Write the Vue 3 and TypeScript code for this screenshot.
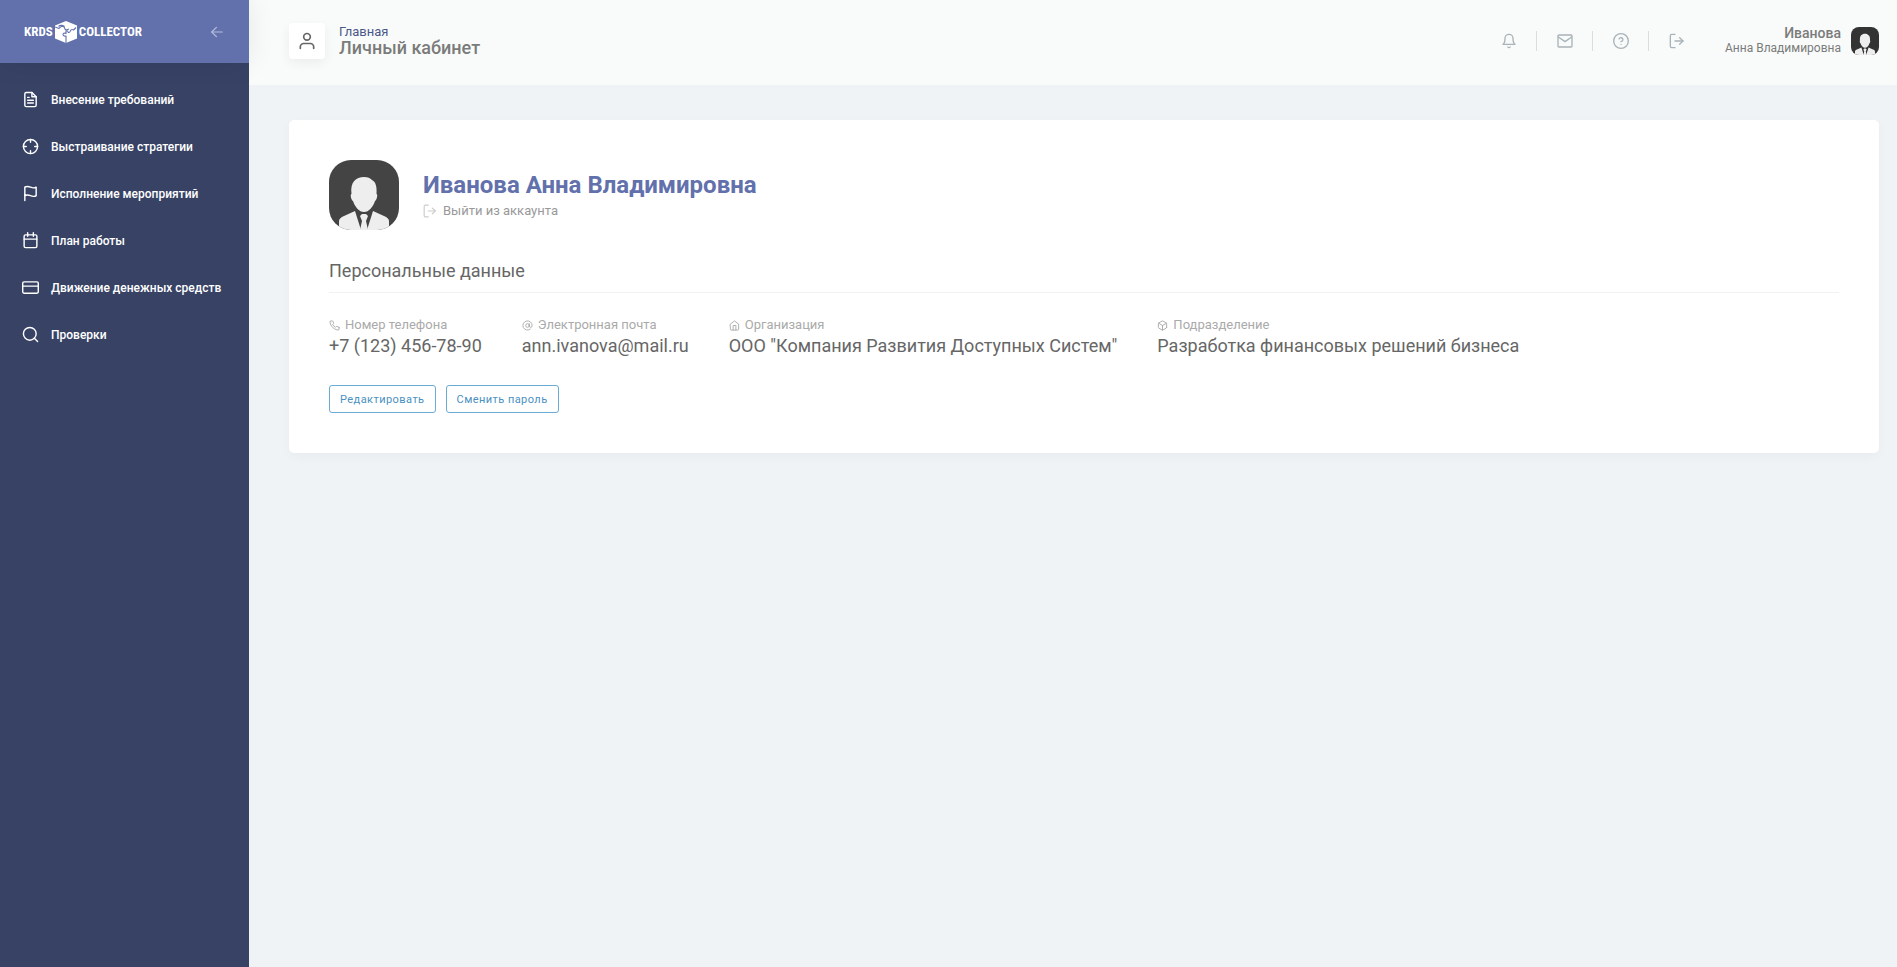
<script setup lang="ts">
import { defineComponent, h } from 'vue'

const icons: Record<string, string[]> = {
  file: ['M14 2H6a2 2 0 0 0-2 2v16a2 2 0 0 0 2 2h12a2 2 0 0 0 2-2V8z', 'M14 2v6h6', 'M16 13H8', 'M16 17H8', 'M10 9H8'],
  target: ['M22 12a10 10 0 1 1-20 0 10 10 0 0 1 20 0z', 'M22 12h-4', 'M6 12H2', 'M12 6V2', 'M12 22v-4'],
  flag: ['M4 15s1-1 4-1 5 2 8 2 4-1 4-1V3s-1 1-4 1-5-2-8-2-4 1-4 1z', 'M4 22v-7'],
  calendar: ['M5 4h14a2 2 0 0 1 2 2v14a2 2 0 0 1-2 2H5a2 2 0 0 1-2-2V6a2 2 0 0 1 2-2z', 'M16 1v5', 'M8 1v5', 'M3 10h18'],
  card: ['M3 4h18a2 2 0 0 1 2 2v12a2 2 0 0 1-2 2H3a2 2 0 0 1-2-2V6a2 2 0 0 1 2-2z', 'M1 10h22'],
  search: ['M20 11a9 9 0 1 1-18 0 9 9 0 0 1 18 0z', 'M22 22l-4.6-4.6'],
  arrow: ['M21 12H3', 'M11 4l-8 8 8 8'],
  user: ['M20 21v-2a4 4 0 0 0-4-4H8a4 4 0 0 0-4 4v2', 'M16 7a4 4 0 1 1-8 0 4 4 0 0 1 8 0z'],
  bell: ['M18 8A6 6 0 0 0 6 8c0 7-3 9-3 9h18s-3-2-3-9', 'M13.7 21a2 2 0 0 1-3.4 0'],
  mail: ['M3 3h18a1.500 1.500 0 0 1 1.500 1.500v15A1.500 1.500 0 0 1 21 21H3a1.500 1.500 0 0 1-1.500-1.500v-15A1.500 1.500 0 0 1 3 3z', 'M2 6l10 7 10-7'],
  help: ['M23 12a11 11 0 1 1-22 0 11 11 0 0 1 22 0z', 'M9.100 9a3 3 0 0 1 5.800 1c0 2-3 3-3 3', 'M12 17h.01'],
  exit: ['M9 22H4a2 2 0 0 1-2-2V4a2 2 0 0 1 2-2h5', 'M16 17l5-5-5-5', 'M21 12H9'],
  phone: ['M22 16.9v3a2 2 0 0 1-2.200 2 19.800 19.800 0 0 1-8.600-3.100 19.500 19.500 0 0 1-6-6A19.800 19.800 0 0 1 2.100 4.200 2 2 0 0 1 4.100 2h3a2 2 0 0 1 2 1.700c.1 1 .4 1.900.7 2.800a2 2 0 0 1-.5 2.100L8.100 9.900a16 16 0 0 0 6 6l1.300-1.300a2 2 0 0 1 2.100-.4c.9.3 1.800.6 2.800.7a2 2 0 0 1 1.700 2z'],
  at: ['M16 12a4 4 0 1 1-8 0 4 4 0 0 1 8 0z', 'M16 8v5a3 3 0 0 0 6 0v-1a10 10 0 1 0-4 8'],
  home: ['M3 9l9-7 9 7v11a2 2 0 0 1-2 2H5a2 2 0 0 1-2-2z', 'M9 22V12h6v10'],
  box: ['M21 16V8a2 2 0 0 0-1-1.700l-7-4a2 2 0 0 0-2 0l-7 4A2 2 0 0 0 3 8v8a2 2 0 0 0 1 1.700l7 4a2 2 0 0 0 2 0l7-4A2 2 0 0 0 21 16z', 'M3.300 7L12 12l8.700-5', 'M12 22V12'],
}

const Icon = defineComponent({
  props: { name: { type: String, required: true } },
  setup: (props) => () =>
    h(
      'svg',
      {
        viewBox: '0 0 24 24',
        fill: 'none',
        stroke: 'currentColor',
        'stroke-width': 2,
        'stroke-linecap': 'round',
        'stroke-linejoin': 'round',
        'aria-hidden': 'true',
      },
      icons[props.name].map((d) => h('path', { d })),
    ),
})

const Avatar = defineComponent({
  setup: () => () =>
    h('svg', { viewBox: '0 0 70 70', role: 'img', 'aria-label': 'Фото профиля' }, [
      h('rect', { width: 70, height: 70, fill: 'currentColor' }),
      h('path', {
        fill: '#eee',
        d: 'M22.500 34C21 22 27 17 35 17c4 0 6 1 8 3 4 2 5 7 4.500 14 1.500 0 .5 6-1.500 7-2 6-6 11-11 11s-9-5-11-11c-2-1-3-7-1.500-7z',
      }),
      h('path', { fill: '#eee', d: 'M10 70V61c0-2 2-4 5-5l11-5 6 19zM60 70V61c0-2-2-4-5-5l-11-5-6 19z' }),
      h('path', { fill: '#eee', d: 'M31 56l2-2h4l2 2-2 5 2 9h-8l2-9z' }),
    ]),
})

const nav = [
  { icon: 'file', text: 'Внесение требований' },
  { icon: 'target', text: 'Выстраивание стратегии' },
  { icon: 'flag', text: 'Исполнение мероприятий' },
  { icon: 'calendar', text: 'План работы' },
  { icon: 'card', text: 'Движение денежных средств' },
  { icon: 'search', text: 'Проверки' },
]

const actions = [
  { icon: 'bell', text: 'Уведомления' },
  { icon: 'mail', text: 'Сообщения' },
  { icon: 'help', text: 'Помощь' },
  { icon: 'exit', text: 'Выход' },
]

const fields = [
  { icon: 'phone', label: 'Номер телефона', value: '+7 (123) 456-78-90' },
  { icon: 'at', label: 'Электронная почта', value: 'ann.ivanova@mail.ru' },
  { icon: 'home', label: 'Организация', value: 'ООО "Компания Развития Доступных Систем"' },
  { icon: 'box', label: 'Подразделение', value: 'Разработка финансовых решений бизнеса' },
]
</script>

<template>
  <div class="layout">
    <aside class="sidebar">
      <div class="brand">
        <a class="logo" href="#">
          <span>KRDS</span>
          <svg class="cube" viewBox="0 0 22 22" aria-hidden="true">
            <path fill="#fff" d="M11 0L22 4.500V17.500L11 22L0 17.500V4.500z" />
            <g fill="none" stroke="#6271ac" stroke-width="1.100" stroke-linejoin="round">
              <path d="M0 6l4 1.500c1-2 4-3 5-1.500 1 1 0 2 2 3l3-1" />
              <path d="M3.500 5.500c2-2 5-1 6 0" />
              <path d="M11 9.500v3c-2-1-3 0-3 1s1 2 3 1.500V22" />
              <path d="M11 10c3-1 1 2 3 1.500s1-3 3-3 1 1 2 0l2-2" />
            </g>
          </svg>
          <span>COLLECTOR</span>
        </a>
        <button class="collapse" type="button" aria-label="Свернуть меню"><Icon name="arrow" /></button>
      </div>
      <nav class="menu">
        <a v-for="item in nav" :key="item.text" href="#"><Icon :name="item.icon" />{{ item.text }}</a>
      </nav>
    </aside>

    <div class="page">
      <header class="topbar">
        <div class="badge"><Icon name="user" /></div>
        <div class="heading">
          <a href="#">Главная</a>
          <h1>Личный кабинет</h1>
        </div>
        <div class="actions">
          <button v-for="item in actions" :key="item.icon" type="button" :aria-label="item.text">
            <Icon :name="item.icon" />
          </button>
        </div>
        <div class="account">
          <div class="account-name">
            <strong>Иванова</strong>
            <span>Анна Владимировна</span>
          </div>
          <Avatar class="avatar-small" />
        </div>
      </header>

      <main class="content">
        <section class="card">
          <div class="profile">
            <Avatar class="avatar" />
            <div>
              <h2>Иванова Анна Владимировна</h2>
              <a class="logout" href="#"><Icon name="exit" />Выйти из аккаунта</a>
            </div>
          </div>
          <h3>Персональные данные</h3>
          <dl class="fields">
            <div v-for="field in fields" :key="field.label">
              <dt><Icon :name="field.icon" />{{ field.label }}</dt>
              <dd>{{ field.value }}</dd>
            </div>
          </dl>
          <div class="buttons">
            <button type="button">Редактировать</button>
            <button type="button">Сменить пароль</button>
          </div>
        </section>
      </main>
    </div>
  </div>
</template>

<style>
body {
  margin: 0;
  background: #eff3f6;
}
</style>

<style scoped>
.layout {
  display: flex;
  min-height: 100vh;
  font-family: Roboto, "Liberation Sans", sans-serif;
  color: #666;
}
a {
  color: inherit;
  text-decoration: none;
}
button {
  font: inherit;
  background: none;
  border: 0;
  padding: 0;
  cursor: pointer;
}
svg {
  display: block;
  flex: none;
}
h1, h2, h3, dl, dd {
  margin: 0;
}
.sidebar {
  flex: none;
  width: 249px;
  background: #374265;
  color: #fff;
}
.brand {
  display: flex;
  align-items: center;
  justify-content: space-between;
  position: relative;
  box-sizing: border-box;
  height: 63px;
  padding: 0 24px;
  background: #6271ac;
  box-shadow: 0 0 28px rgba(0, 0, 0, 0.08);
}
.logo {
  display: flex;
  align-items: center;
  gap: 2px;
  font-family: "Roboto Condensed", "Liberation Sans Narrow", Roboto, sans-serif;
  font-size: 13px;
  line-height: 22px;
  font-weight: 700;
}
.cube {
  width: 22px;
  height: 22px;
}
.collapse {
  color: #b5bddc;
}
.collapse svg {
  width: 16px;
  height: 14px;
}
.menu {
  padding: 13px 0;
}
.menu a {
  display: flex;
  align-items: center;
  gap: 12px;
  height: 47px;
  padding-left: 22px;
  font-size: 12px;
  font-weight: 500;
}
.menu svg {
  width: 17px;
  height: 17px;
}
.page {
  flex: 1;
  min-width: 0;
}
.topbar {
  display: flex;
  align-items: center;
  box-sizing: border-box;
  height: 85px;
  padding: 0 18px 4px 40px;
  background: #f9fbfa;
}
.badge {
  display: grid;
  place-items: center;
  width: 36px;
  height: 36px;
  border-radius: 4px;
  background: #fff;
  box-shadow: 0 4px 12px rgba(0, 0, 0, 0.06);
}
.badge svg {
  width: 20px;
  height: 20px;
}
.heading {
  margin-left: 14px;
}
.heading a {
  display: block;
  font-size: 13px;
  line-height: 14px;
  color: #4a5788;
}
.heading h1 {
  font-size: 18px;
  line-height: 18px;
  font-weight: 500;
  color: #7b7b7b;
}
.actions {
  display: flex;
  margin-left: auto;
}
.actions button {
  display: grid;
  place-items: center;
  width: 56px;
  height: 20px;
  color: #a9b3b8;
}
.actions button:not(:last-child) {
  border-right: 1px solid #d9dee2;
}
.actions svg {
  width: 16px;
  height: 16px;
}
.account {
  display: flex;
  align-items: center;
  gap: 10px;
  margin-left: 20px;
}
.account-name {
  text-align: right;
  color: #7b7b7b;
}
.account-name strong,
.account-name span {
  display: block;
}
.account-name strong {
  font-size: 14px;
  line-height: 15px;
  font-weight: 500;
}
.account-name span {
  font-size: 12px;
  line-height: 15px;
}
.avatar-small {
  width: 28px;
  height: 28px;
  border-radius: 8px;
  color: #333;
}
.content {
  padding: 35px 18px 35px 40px;
}
.card {
  padding: 40px;
  border-radius: 5px;
  background: #fff;
  box-shadow: 0 4px 12px rgba(0, 0, 0, 0.03);
}
.profile {
  display: flex;
  align-items: center;
  gap: 24px;
}
.avatar {
  width: 70px;
  height: 70px;
  border-radius: 22px;
  color: #444;
}
.profile h2 {
  font-size: 24px;
  line-height: 32px;
  font-weight: 700;
  color: #6271ac;
}
.logout {
  display: flex;
  align-items: center;
  gap: 6px;
  font-size: 13px;
  line-height: 20px;
  color: #999;
}
.logout svg {
  width: 14px;
  height: 14px;
  color: #ccc;
}
.card h3 {
  margin-top: 29px;
  padding-bottom: 9px;
  border-bottom: 1px solid #f2f2f2;
  font-size: 18px;
  line-height: 24px;
  font-weight: 400;
}
.fields {
  display: flex;
  flex-wrap: wrap;
  gap: 20px 40px;
  margin-top: 23px;
}
.fields dt {
  display: flex;
  align-items: center;
  gap: 5px;
  font-size: 13px;
  line-height: 18px;
  color: #aaa;
}
.fields svg {
  width: 11px;
  height: 11px;
}
.fields dd {
  font-size: 18px;
  line-height: 24px;
}
.buttons {
  display: flex;
  gap: 10px;
  margin-top: 27px;
}
.buttons button {
  height: 28px;
  padding: 0 10px;
  border: 1px solid #6bacd4;
  border-radius: 3px;
  font-size: 11px;
  letter-spacing: 0.04em;
  color: #4a90c2;
}
</style>
